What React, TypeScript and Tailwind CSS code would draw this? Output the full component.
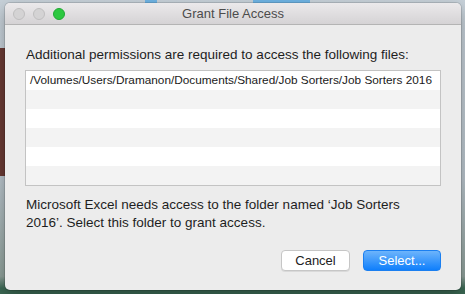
import { useState } from 'react';

const rows = [
  '/Volumes/Users/Dramanon/Documents/Shared/Job Sorters/Job Sorters 2016',
  '',
  '',
  '',
  '',
  '',
];

export default function App() {
  const [selected] = useState<string | null>(null);

  return (
    <div
      className="relative w-[465px] h-[294px] overflow-hidden bg-[linear-gradient(to_bottom,#c7d1d9_0%,#b9c4cc_60%,#8fa09a_94%,#3d6a55_98%)]"
      style={{ fontFamily: '"Helvetica Neue", "Liberation Sans", Arial, sans-serif' }}
    >
      {/* desktop strip behind the sheet */}
      <div className="absolute left-0 top-[48px] w-[6px] h-[128px] bg-[#6a3a34]" />
      <div className="absolute left-[145px] top-0 w-[12px] h-[3px] bg-[#6fb4e4]" />
      <div className="absolute left-[253px] top-0 w-[57px] h-[3px] bg-[#6fb4e4]" />
      <div className="absolute left-0 bottom-0 w-full h-[4px] bg-[#3b6853]" />

      {/* Window */}
      <div className="absolute left-[5px] top-[3px] w-[456px] h-[287px] rounded-[5px] bg-[#ececec] shadow-[0_0_0_1px_rgba(0,0,0,0.12),0_6px_16px_rgba(0,0,0,0.3)] overflow-hidden flex flex-col">
        {/* Title bar */}
        <div className="relative h-[22px] shrink-0 bg-[linear-gradient(to_bottom,#ebe9eb,#d5d3d5)] border-b border-[#b4b4b4] flex items-center">
          <div className="flex items-center gap-[8px] pl-[8px]">
            <span className="w-[12px] h-[12px] rounded-full bg-[#d4d3d4] border border-[#bfbebf]" />
            <span className="w-[12px] h-[12px] rounded-full bg-[#d4d3d4] border border-[#bfbebf]" />
            <span className="w-[12px] h-[12px] rounded-full bg-[#2cc840] border border-[#20a834]" />
          </div>
          <div className="absolute inset-0 flex items-center justify-center text-[13px] text-[#4c4c4c]">
            Grant File Access
          </div>
        </div>

        {/* Body */}
        <div className="flex flex-col px-[20px] pt-[22px]">
          <p className="text-[13.5px] leading-[16px] text-[#1e1e1e] pl-[1px]">
            Additional permissions are required to access the following files:
          </p>

          <div className="mt-[7px] w-[416px] border border-[#c3c3c3] bg-white">
            {rows.map((path, i) => (
              <div
                key={i}
                className={
                  'h-[19px] px-[4px] flex items-center text-[11.8px] text-[#1a1a1a] whitespace-nowrap ' +
                  (i % 2 === 0 ? 'bg-white' : 'bg-[#f3f3f3]') +
                  (selected === path && path ? ' bg-[#0a64d8] text-white' : '')
                }
              >
                {path}
              </div>
            ))}
          </div>

          <p className="mt-[10px] text-[13.5px] leading-[18px] text-[#1e1e1e] pl-[1px]">
            Microsoft Excel needs access to the folder named ‘Job Sorters
            <br />
            2016’. Select this folder to grant access.
          </p>

          <div className="mt-[18px] flex justify-end gap-[13px]">
            <button className="w-[69px] h-[21px] rounded-[4px] bg-white border border-[#c6c6c6] shadow-[0_1px_0_rgba(0,0,0,0.08)] text-[13px] text-[#222]">
              Cancel
            </button>
            <button className="w-[78px] h-[21px] rounded-[4px] bg-[linear-gradient(to_bottom,#6db4fb,#0f7ffc)] border border-[#1b7ff0] text-[13px] text-white">
              Select...
            </button>
          </div>
        </div>
      </div>
    </div>
  );
}
